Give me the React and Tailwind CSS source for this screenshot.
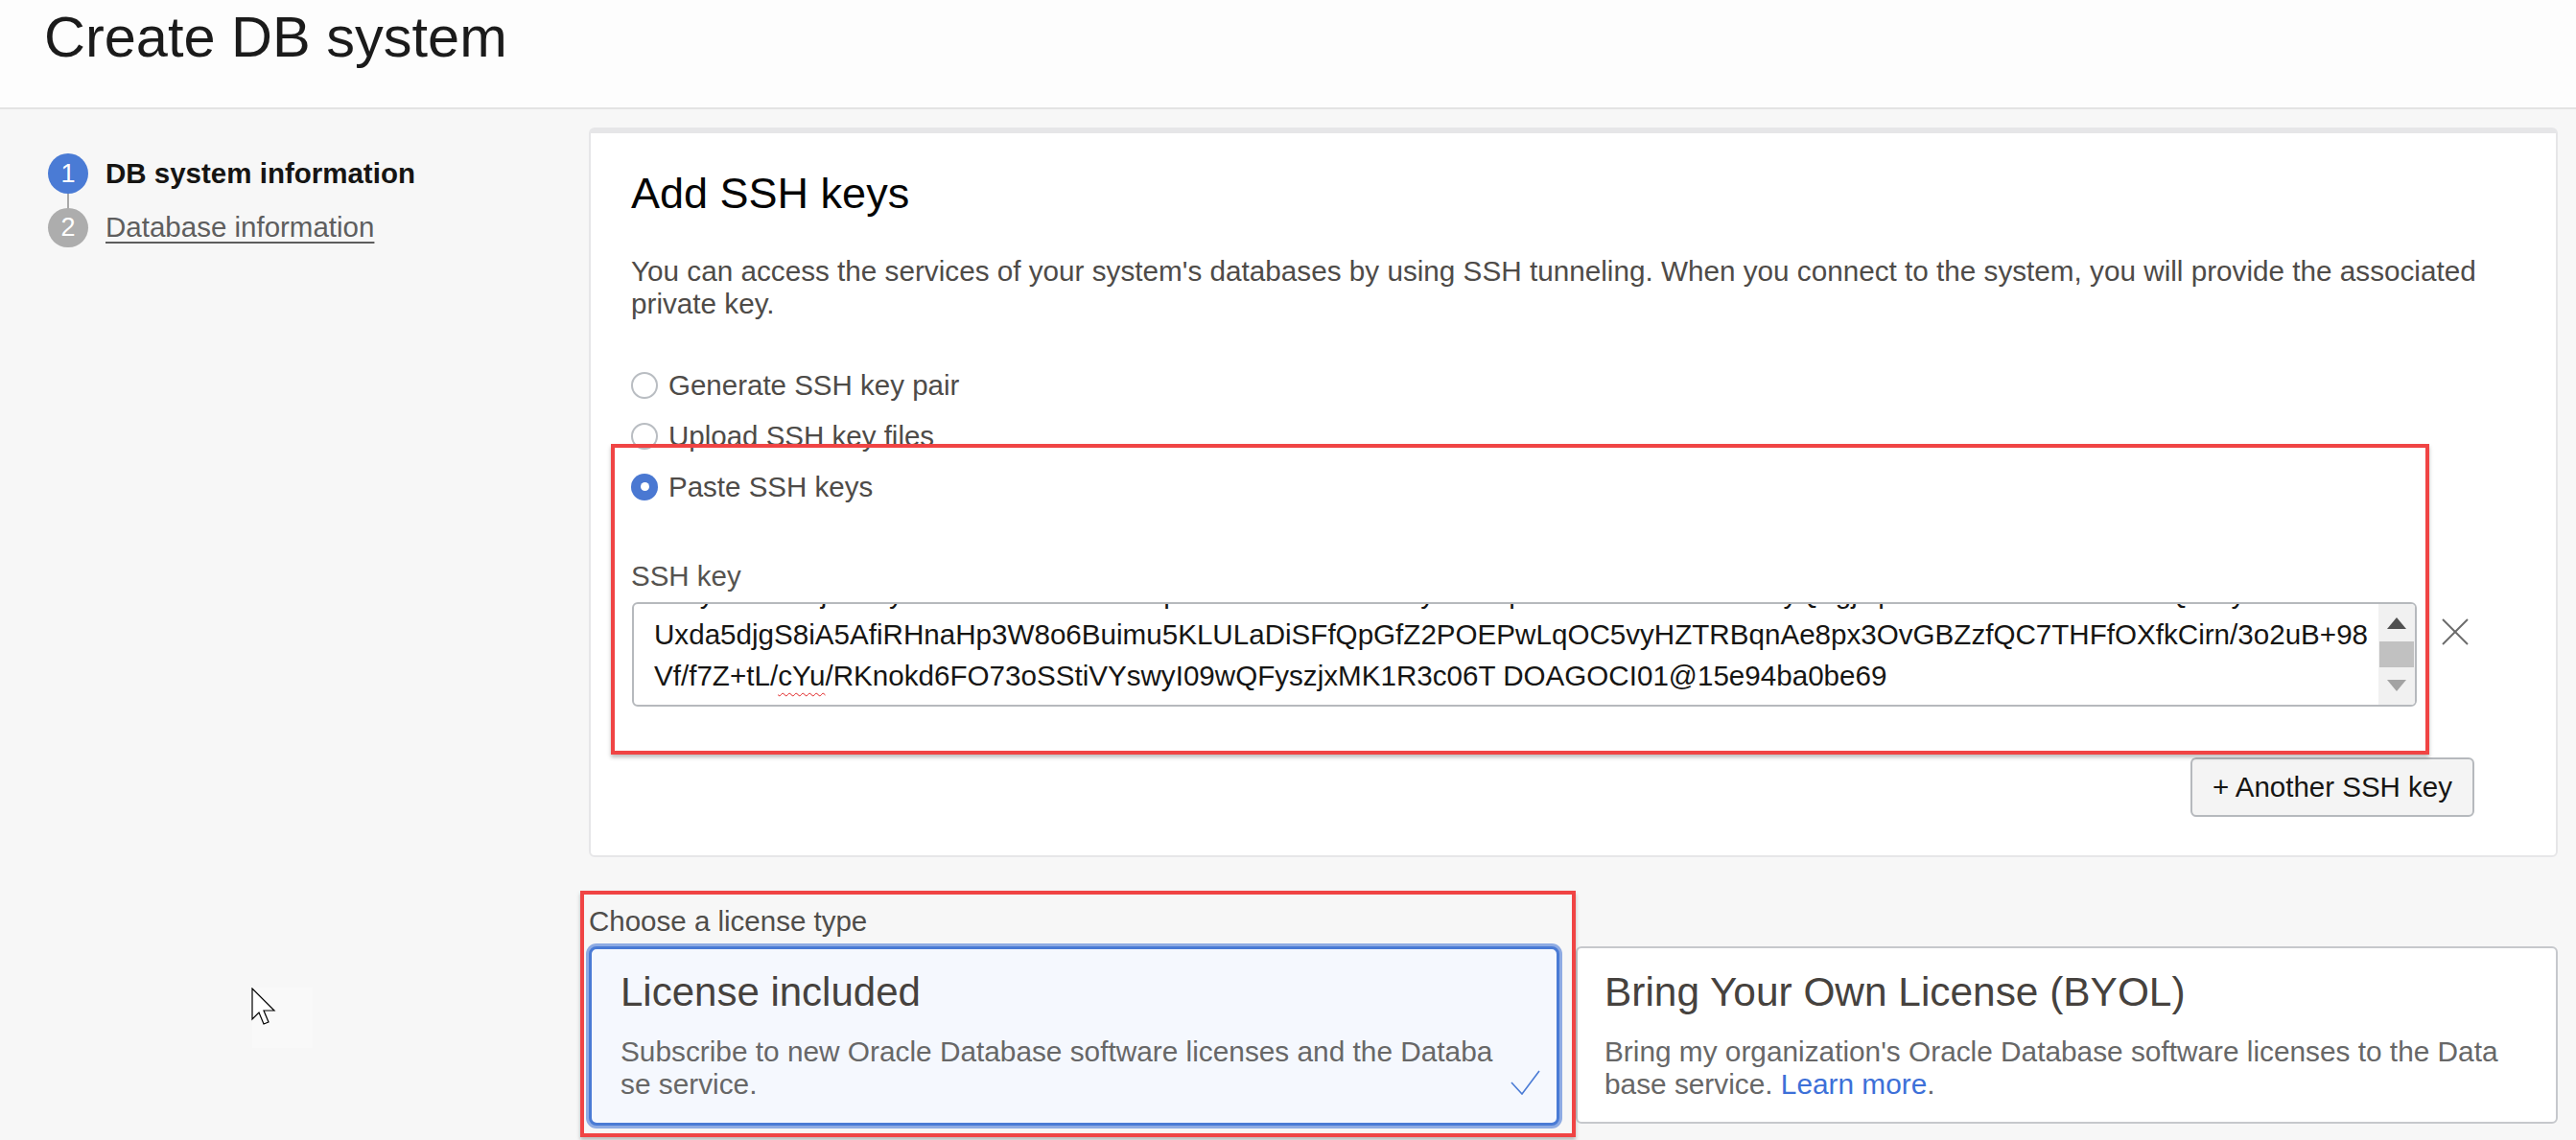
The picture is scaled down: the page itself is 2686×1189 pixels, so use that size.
import React from "react";

function Radio({ checked, label }) {
  return (
    <div className="flex items-center h-[53px]">
      {checked ? (
        <span className="w-[28px] h-[28px] rounded-full bg-[#4a78d2] flex items-center justify-center shrink-0">
          <span className="w-[9px] h-[9px] rounded-full bg-white" />
        </span>
      ) : (
        <span className="w-[28px] h-[28px] rounded-full border-2 border-[#b9bdc2] bg-white shrink-0" />
      )}
      <span className="ml-[11px] text-[29.5px] leading-[53px] text-[#4e4b48]">{label}</span>
    </div>
  );
}

export default function App() {
  return (
    <div className="relative w-[2686px] h-[1189px] overflow-hidden bg-[#f7f7f7] font-['Liberation_Sans',Arial,sans-serif]">
      {/* Header */}
      <header className="h-[114px] bg-[#fdfdfd] border-b-2 border-[#e3e3e3] pl-[46px] pt-[9px]">
        <h1 className="text-[59.5px] leading-[60px] text-[#1b1b1b] font-normal">Create DB system</h1>
      </header>

      <div className="flex">
        {/* Sidebar */}
        <aside className="w-[614px] shrink-0 pl-[50px] pt-[46px]">
          <div className="flex items-center h-[42px]">
            <span className="w-[42px] h-[42px] rounded-full bg-[#4a7bd5] text-white text-[27px] flex items-center justify-center">1</span>
            <span className="ml-[18px] text-[29.5px] font-bold text-[#161513]">DB system information</span>
          </div>
          <div className="w-[2px] h-[15px] bg-[#a9a9a9] ml-[20px]" />
          <div className="flex items-center h-[41px]">
            <span className="w-[42px] h-[41px] rounded-full bg-[#adadad] text-white text-[27px] flex items-center justify-center">2</span>
            <span className="ml-[18px] text-[29.5px] text-[#5e5e5e] underline underline-offset-[5px] decoration-[2px]">Database information</span>
          </div>
        </aside>

        {/* Main */}
        <main className="w-[2072px] pr-[19px] pt-[19px]">
          <section className="bg-white border-2 border-[#e6e6e8] border-t-[6px] rounded-[6px] pl-[42px] pr-[42px] pt-[37px] pb-[40px]">
            <h2 className="text-[45px] leading-[52px] text-[#050505] font-normal">Add SSH keys</h2>
            <p className="mt-[38px] text-[29.7px] leading-[34px] text-[#4e4b48]">
              You can access the services of your system's databases by using SSH tunneling. When you connect to the system, you will provide the associated private key.
            </p>
            <div className="mt-[41px]">
              <Radio label="Generate SSH key pair" />
              <Radio label="Upload SSH key files" />
              <Radio checked label="Paste SSH keys" />
            </div>
            <div className="mt-[50px] text-[29.5px] leading-[34px] text-[#555350]">SSH key</div>
            <div className="mt-[10px] flex items-start">
              <div className="ml-[1px] w-[1861px] h-[109px] border-2 border-[#b6b9bd] rounded-[6px] flex overflow-hidden bg-white">
                <div className="flex-1 overflow-hidden pl-[21px] text-[29.6px] leading-[43px] text-[#161513]">
                  <div className="mt-[-33px] whitespace-nowrap">nJhyEtaLWMjs2cVyMRn1ZXEeTRI4FNkpUuAlH7mxWsL8Z5yBT2OpR0VNbDMtAd5xLKeyQ1gjwpSaNCm0BElIK8f3zoTQWdyHcXiuPs2Gm</div>
                  <div className="whitespace-nowrap">Uxda5djgS8iA5AfiRHnaHp3W8o6Buimu5KLULaDiSFfQpGfZ2POEPwLqOC5vyHZTRBqnAe8px3OvGBZzfQC7THFfOXfkCirn/3o2uB+98</div>
                  <div className="whitespace-nowrap">
                    Vf/f7Z+tL/
                    <span className="underline decoration-wavy decoration-[#e02424] decoration-[1px] underline-offset-[7px]">cYu</span>
                    /RKnokd6FO73oSStiVYswyI09wQFyszjxMK1R3c06T DOAGOCI01@15e94ba0be69
                  </div>
                </div>
                <div className="w-[38px] h-full bg-[#f1f1f1] flex flex-col items-center pt-[14px]">
                  <svg width="20" height="12" viewBox="0 0 20 12">
                    <polygon points="10,0 20,12 0,12" fill="#505050" />
                  </svg>
                  <div className="mt-[13px] w-[36px] h-[27px] bg-[#c1c1c1]" />
                  <svg className="mt-[13px]" width="20" height="12" viewBox="0 0 20 12">
                    <polygon points="0,0 20,0 10,12" fill="#a3a3a3" />
                  </svg>
                </div>
              </div>
              <svg className="ml-[26px] mt-[17px]" width="28" height="28" viewBox="0 0 28 28">
                <line x1="1" y1="1" x2="27" y2="27" stroke="#6b6b6b" strokeWidth="2" />
                <line x1="27" y1="1" x2="1" y2="27" stroke="#6b6b6b" strokeWidth="2" />
              </svg>
            </div>
            <div className="mt-[53px] flex justify-end">
              <button className="mr-[43px] h-[62px] px-[21px] border-2 border-[#b6b9bd] rounded-[6px] bg-[#f4f4f4] text-[29.5px] text-[#161513]">
                + Another SSH key
              </button>
            </div>
          </section>

          <div className="mt-[50px] text-[29.5px] leading-[34px] text-[#4f4d4a]">Choose a license type</div>
          <div className="mt-[9px] flex gap-[17px]">
            <div className="relative w-[1012px] h-[187px] shrink-0 border-[3px] border-[#4a7bd5] rounded-[8px] bg-[#f5f8fe] shadow-[0_0_0_3px_#8eabe3] pl-[30px] pt-[21px]">
              <div className="text-[42px] leading-[48px] text-[#46423e]">License included</div>
              <div className="mt-[21px] text-[29.8px] leading-[34px] text-[#676767]">
                Subscribe to new Oracle Database software licenses and the Databa
                <br />
                se service.
              </div>
              <svg className="absolute right-[17px] bottom-[29px]" width="31" height="26" viewBox="0 0 31 26">
                <polyline points="1,13 12,25 30,1" fill="none" stroke="#4a7bd5" strokeWidth="1.6" />
              </svg>
            </div>
            <div className="flex-1 h-[185px] border-2 border-[#c6c8cc] rounded-[6px] bg-white pl-[28px] pt-[22px]">
              <div className="text-[42.4px] leading-[48px] text-[#46423e]">Bring Your Own License (BYOL)</div>
              <div className="mt-[21px] text-[29.8px] leading-[34px] text-[#676767]">
                Bring my organization's Oracle Database software licenses to the Data
                <br />
                base service. <span className="text-[#3d70d8]">Learn more</span>.
              </div>
            </div>
          </div>
        </main>
      </div>

      {/* Annotation overlays */}
      <div className="absolute left-[637px] top-[463px] w-[1896px] h-[324px] border-[4px] border-[#f04444] shadow-[0_3px_4px_rgba(0,0,0,0.25)] pointer-events-none" />
      <div className="absolute left-[605px] top-[929px] w-[1038px] h-[257px] border-[4px] border-[#f04444] shadow-[0_3px_4px_rgba(0,0,0,0.25)] pointer-events-none" />

      {/* Cursor */}
      <div className="absolute left-[263px] top-[1030px] w-[63px] h-[63px] bg-[#f9f9f9]" />
      <svg className="absolute left-[262px] top-[1030px]" width="26" height="40" viewBox="0 0 26 40">
        <path d="M1 1 L1 33 L8 26 L13 38 L18 36 L13 24 L24 24 Z" fill="#ffffff" stroke="#000000" strokeWidth="1.2" />
      </svg>
    </div>
  );
}
